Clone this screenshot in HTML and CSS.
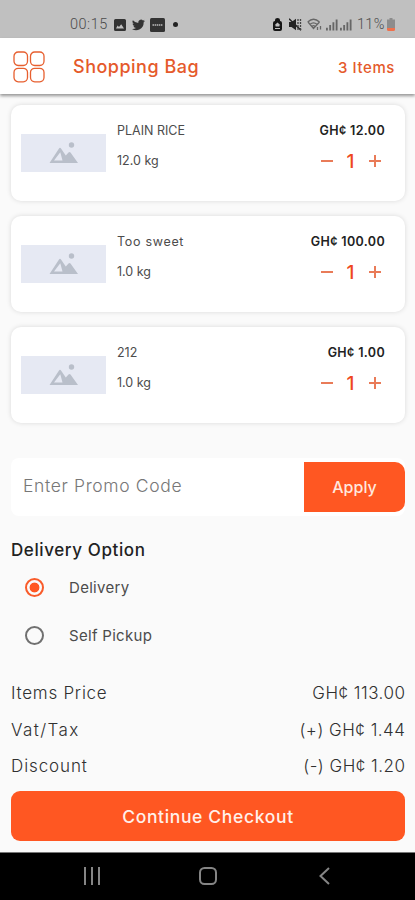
FILE: index.html
```html
<!DOCTYPE html>
<html lang="en">
<head>
<meta charset="utf-8">
<title>Shopping Bag</title>
<link rel="stylesheet" href="styles.css">
</head>
<body>
<svg class="defs" width="0" height="0">
  <symbol id="photo" viewBox="0 0 30 22">
    <path fill-rule="evenodd" d="M.5 21 10 6.500q1-1.500 2 0l4.800 7 2.700-3q1-1 2 0L29 21ZM5 18.500h8.500L11.300 10.200Z"/>
    <circle cx="22.500" cy="3" r="2.700"/>
  </symbol>
  <symbol id="signal" viewBox="0 0 13 13">
    <path d="M0 10h2v3H0zM3.500 7h2v6h-2zM7 4h2v9H7zM10.500 1h2v12h-2z"/>
  </symbol>
</svg>
<div class="phone">
  <div class="status">
    <span class="clock">00:15</span>
    <svg class="st-photo" width="12" height="12" viewBox="0 0 12 12"><path fill="#333" fill-rule="evenodd" d="M1.500 0h9Q12 0 12 1.500v9q0 1.500-1.500 1.500h-9Q0 12 0 10.500v-9Q0 0 1.500 0ZM2 9.500h8L7.200 5.200 5 8 3.600 6.500Z"/></svg>
    <svg class="st-bird" width="13" height="12" viewBox="0 0 24 20"><path fill="#333" d="M24 2.400a10 10 0 0 1-2.800.8A5 5 0 0 0 23.300.5a10 10 0 0 1-3.100 1.200 4.900 4.900 0 0 0-8.400 4.500A14 14 0 0 1 1.700 1a4.900 4.900 0 0 0 1.500 6.600A5 5 0 0 1 1 7a5 5 0 0 0 3.900 4.900 5 5 0 0 1-2.200 0 4.900 4.900 0 0 0 4.600 3.500A10 10 0 0 1 0 17.400 14 14 0 0 0 21.500 5a10 10 0 0 0 2.500-2.600Z"/></svg>
    <svg class="st-news" width="15" height="14" viewBox="0 0 15 14"><rect width="15" height="14" rx="1.500" fill="#333"/><path d="M2.500 7h10" stroke="#999" stroke-width="2" stroke-dasharray="1.500 .6"/></svg>
    <i class="st-dot"></i>
    <span class="grow"></span>
    <svg width="9" height="13" viewBox="0 0 9 13"><path fill="#151515" fill-rule="evenodd" d="M2 3V2q0-2 2.500-2T7 2v1q2 0 2 2v6q0 2-2 2H2q-2 0-2-2V5q0-2 2-2ZM4.500 4.500 1.600 7.300h1V8.500h3.800V7.300h1ZM2 10v1h5v-1Z"/></svg>
    <svg class="st-mute" width="13" height="13" viewBox="0 0 13 13"><path fill="#222" d="M0 4h2.500L7 .8v11.400L2.500 9H0Z"/><path d="M0 .8 12 12.300" stroke="#222" stroke-width="1.500"/><path d="M9 1v11M11.500 1v11" stroke="#444" stroke-width="1.300" stroke-dasharray="2 1"/></svg>
    <svg class="st-wifi" width="15" height="13" viewBox="0 0 15 13" fill="none" stroke="#666" stroke-width="1.300"><path d="M.7 4Q6.500-1.500 12.500 4M3 6.300q3.500-3 7 0M1 4l5.500 6.500L12.500 4M5 8.300q1.500-1.300 3 0M10.500 12v-3M13.500 8v3.500"/></svg>
    <svg class="st-sig" width="12" height="13"><use href="#signal"/></svg>
    <svg class="st-sig2" width="12" height="13"><use href="#signal"/></svg>
    <span class="percent">11%</span>
    <svg width="8" height="13" viewBox="0 0 8 13"><path fill="#8c8c8c" d="M2.500 0h3v1.500H8V10H0V1.500h2.500Z"/><path fill="#ef704b" d="M0 10h8v1.500Q8 13 6.500 13h-5Q0 13 0 11.500Z"/></svg>
  </div>
  <header class="appbar">
    <svg class="menu" width="32" height="32" viewBox="0 0 32 32" fill="none" stroke="#e75f2f" stroke-width="1.300"><rect x="1" y="1" width="13.500" height="13.500" rx="4.200"/><rect x="17.500" y="1" width="13.500" height="13.500" rx="4.200"/><rect x="1" y="17.300" width="13.500" height="13.500" rx="4.200"/><rect x="17.500" y="17.300" width="13.500" height="13.500" rx="4.200"/></svg>
    <h1 class="title">Shopping Bag</h1>
    <span class="count">3 Items</span>
  </header>
  <main class="content">
    <section class="cards">
      <article class="card">
        <div class="thumb"><svg width="30" height="22"><use href="#photo"/></svg></div>
        <div class="info"><span class="name">PLAIN RICE</span><span class="weight">12.0 kg</span></div>
        <div class="buy"><span class="price">GH¢ 12.00</span><div class="qty"><i class="minus"></i><b>1</b><i class="plus"></i></div></div>
      </article>
      <article class="card">
        <div class="thumb"><svg width="30" height="22"><use href="#photo"/></svg></div>
        <div class="info"><span class="name wide">Too sweet</span><span class="weight">1.0 kg</span></div>
        <div class="buy"><span class="price">GH¢ 100.00</span><div class="qty"><i class="minus"></i><b>1</b><i class="plus"></i></div></div>
      </article>
      <article class="card">
        <div class="thumb"><svg width="30" height="22"><use href="#photo"/></svg></div>
        <div class="info"><span class="name">212</span><span class="weight">1.0 kg</span></div>
        <div class="buy"><span class="price">GH¢ 1.00</span><div class="qty"><i class="minus"></i><b>1</b><i class="plus"></i></div></div>
      </article>
    </section>
    <div class="promo"><span class="hint">Enter Promo Code</span><div class="apply">Apply</div></div>
    <h2 class="heading">Delivery Option</h2>
    <div class="option"><i class="radio on"></i><span>Delivery</span></div>
    <div class="option"><i class="radio"></i><span>Self Pickup</span></div>
    <div class="totals">
      <div class="line"><span>Items Price</span><span class="amount">GH¢ 113.00</span></div>
      <div class="line"><span class="vat">Vat/Tax</span><span class="amount">(+) GH¢ 1.44</span></div>
      <div class="line"><span class="disc">Discount</span><span class="amount">(-) GH¢ 1.20</span></div>
    </div>
    <div class="checkout">Continue Checkout</div>
  </main>
  <nav class="nav">
    <svg width="18" height="18" viewBox="0 0 18 18" stroke="#858585" stroke-width="2"><path d="M2 0v18M9 0v18M16 0v18"/></svg>
    <svg width="18" height="18" viewBox="0 0 18 18" fill="none" stroke="#858585" stroke-width="2"><rect x="1" y="1" width="16" height="16" rx="4.500"/></svg>
    <svg width="18" height="18" viewBox="0 0 18 18" fill="none" stroke="#858585" stroke-width="2"><path d="M14 1 5.500 9l8.500 8"/></svg>
  </nav>
</div>
</body>
</html>
```

FILE: styles.css
```css
* { box-sizing: border-box; }
body { margin: 0; font-family: Inter, "Open Sans", sans-serif; background: #fafafa; color: #303030; }
h1, h2 { margin: 0; font-weight: 500; }
svg { display: block; flex: none; }
.defs { position: absolute; }
.phone { width: 415px; height: 900px; display: flex; flex-direction: column; overflow: hidden; white-space: nowrap; }

.status { height: 38px; flex: none; background: #c0c0c0; display: flex; align-items: center; padding: 11px 20px 0 70px; color: #4c4c4c; font: 300 14.500px/18px Roboto, sans-serif; }
.clock { width: 44px; letter-spacing: .5px; }
.st-bird { margin-left: 6px; }
.st-news { margin-left: 5px; }
.st-dot { width: 5px; height: 5px; border-radius: 50%; background: #222; margin-left: 8px; }
.grow { flex: 1; }
.st-mute { margin-left: 7px; }
.st-wifi { margin-left: 5px; }
.st-sig { margin-left: 4px; fill: #666; }
.st-sig2 { margin-left: 2px; fill: #666; }
.percent { width: 27px; margin: 0 3px 0 5px; letter-spacing: .3px; }

.appbar { height: 56px; flex: none; background: #fff; display: flex; align-items: center; padding: 2px 20px 0 13px; color: #e55a2b; box-shadow: 0 2px 3px #0006; z-index: 1; }
.title { margin-left: 28px; font-size: 18px; line-height: 24px; letter-spacing: .5px; flex: 1; }
.count { font-size: 15px; font-weight: 500; letter-spacing: .6px; }

.content { flex: 1; display: flex; flex-direction: column; padding: 11px 10px 10px 11px; background: #fafafa; }
.cards { display: flex; flex-direction: column; gap: 15px; }
.card { height: 96px; background: #fff; border-radius: 10px; box-shadow: 0 0 5px #0002; display: flex; padding: 0 20px 0 10px; }
.thumb { width: 85px; height: 38px; margin-top: 29px; background: #e6e9f3; display: flex; align-items: center; justify-content: center; fill: #b9bfca; }
.info { flex: 1; margin-left: 11px; padding-top: 16px; display: flex; flex-direction: column; gap: 10px; font-size: 12.500px; line-height: 20px; color: #4c4c4c; }
.wide { letter-spacing: .7px; }
.buy { display: flex; flex-direction: column; align-items: flex-end; padding-top: 16px; }
.price { font-size: 12.500px; line-height: 20px; font-weight: 600; color: #222; letter-spacing: .35px; }
.qty { display: flex; align-items: center; margin: 8px 4px 0 0; height: 24px; color: #ee4620; }
.qty b { width: 36px; padding-right: 1px; text-align: center; font-size: 19px; font-weight: 500; }
.minus, .plus { width: 12px; height: 12px; background: linear-gradient(#e97b58, #e97b58) center / 12px 2px no-repeat; }
.plus { background: linear-gradient(#e97b58, #e97b58) center / 12px 2px no-repeat, linear-gradient(#e97b58, #e97b58) center / 2px 12px no-repeat; }

.promo { height: 58px; margin-top: 35px; background: #fff; border-radius: 8px; display: flex; align-items: center; justify-content: space-between; padding-left: 12px; }
.hint { font-size: 17.500px; color: #777; letter-spacing: .65px; font-weight: 350; line-height: 22px; padding-bottom: 2px; }
.apply { width: 101px; height: 50px; background: #ff5722; color: #ffe8df; border-radius: 0 10px 10px 0; text-align: center; font-size: 16px; font-weight: 500; line-height: 51px; }
.heading { margin-top: 22px; font-size: 17px; line-height: 24px; color: #222; letter-spacing: .6px; font-weight: 450; }
.option { height: 48px; display: flex; align-items: center; padding-left: 14px; font-size: 15px; color: #4c4c4c; letter-spacing: .3px; }
.heading + .option { margin-top: 1px; }
.radio { width: 19px; height: 19px; border: 2px solid #707070; border-radius: 50%; margin-right: 25px; }
.radio.on { border-color: #f95b2a; background: radial-gradient(circle, #ff5722 4.500px, #fafafa 5.300px); }
.totals { margin-top: 16px; }
.line { height: 36.500px; display: flex; align-items: center; justify-content: space-between; font-size: 17px; font-weight: 300; letter-spacing: .75px; }
.vat { letter-spacing: 1.4px; }
.disc { letter-spacing: .9px; }
.amount { letter-spacing: .5px; margin-right: -.5px; }
.checkout { height: 50px; margin-top: 6px; background: #ff5722; color: #fff0ea; border-radius: 9px; text-align: center; font-size: 17.500px; font-weight: 500; line-height: 51px; letter-spacing: .65px; }

.nav { height: 48px; flex: none; background: #000; border-top: 1px solid #777; display: flex; align-items: center; justify-content: space-between; padding: 0 82px 2px 83px; }
```
